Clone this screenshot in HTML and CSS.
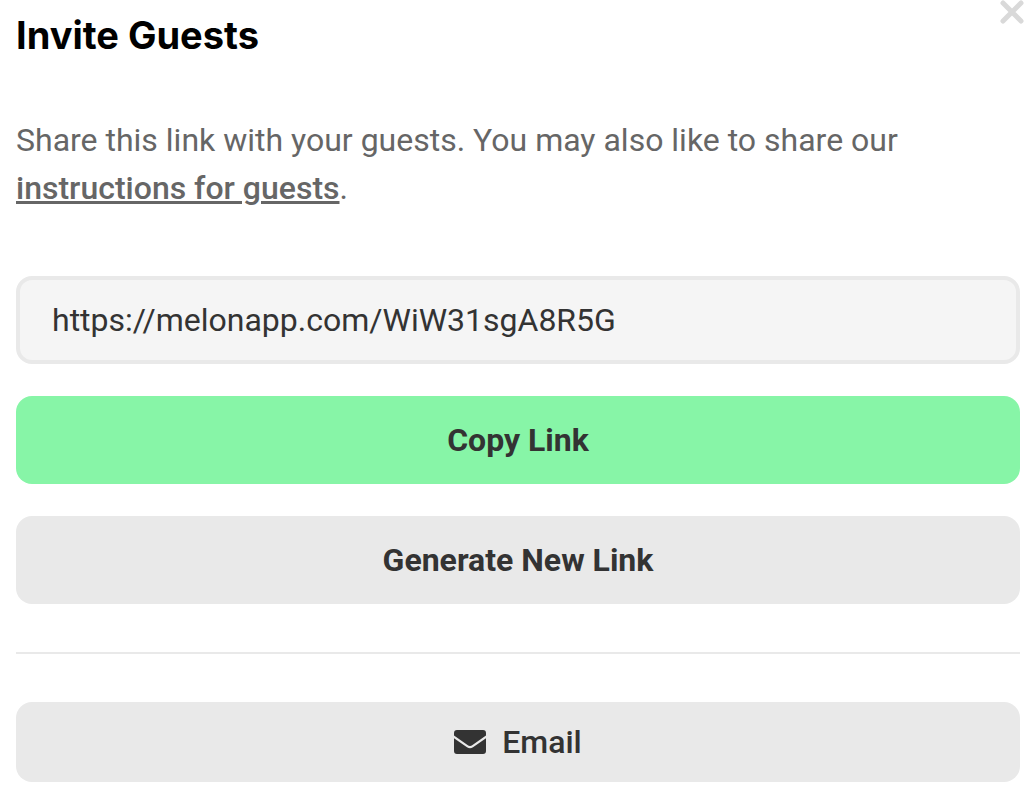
FILE: index.html
```html
<!DOCTYPE html>
<html lang="en">
<head>
<meta charset="utf-8">
<title>Invite Guests</title>
<link rel="stylesheet" href="styles.css">
</head>
<body>
<main class="dialog">
  <button class="close" type="button" aria-label="Close">
    <svg viewBox="0 0 24 24" width="24" height="24" aria-hidden="true"><path d="M3 3 21 21M21 3 3 21"/></svg>
  </button>
  <h1 class="title">Invite Guests</h1>
  <p class="intro">Share this link with your guests. You may also like to share our <a class="guide" href="#instructions">instructions for guests</a>.</p>
  <div class="actions">
    <input class="link-field" type="text" aria-label="Invite link" value="https://melonapp.com/WiW31sgA8R5G" readonly>
    <button class="button primary" type="button">Copy Link</button>
    <button class="button" type="button">Generate New Link</button>
  </div>
  <hr class="divider">
  <a class="button email" href="mailto:">
    <svg class="mail" viewBox="0 0 32 24" width="32" height="24" aria-hidden="true"><path d="M3 0H29Q32 0 32 3V5.500L18.500 15Q16 16.800 13.500 15L0 5.500V3Q0 0 3 0ZM0 8.200 13 17.200Q16 19.200 19 17.200L32 8.200V21Q32 24 29 24H3Q0 24 0 21Z"/></svg>
    <span>Email</span>
  </a>
</main>
</body>
</html>
```
FILE: styles.css
```css
* { box-sizing: border-box; }
body {
  margin: 0;
  background: #fff;
  color: #333;
  font-family: Roboto, "Liberation Sans", sans-serif;
  font-size: 32px;
  line-height: 48px;
}
.dialog {
  position: relative;
  padding: 12px 16px 10px;
}
.close {
  position: absolute;
  top: 0;
  right: 12px;
  display: block;
  padding: 0;
  border: 0;
  background: none;
  cursor: pointer;
}
.close svg {
  display: block;
  fill: none;
  stroke: #d9d9d9;
  stroke-width: 5;
  stroke-linecap: round;
}
.title {
  margin: 0;
  color: #000;
  font-family: Inter, "Liberation Sans", sans-serif;
  font-size: 38px;
  font-weight: 700;
  line-height: 46px;
}
.intro {
  margin: 58px 0 64px;
  color: #666;
}
.guide {
  color: inherit;
  font-weight: 500;
  text-decoration-thickness: 3px;
}
.actions {
  display: grid;
  gap: 32px;
}
.link-field,
.button {
  width: 100%;
  border-radius: 16px;
  color: #333;
  font: inherit;
}
.link-field {
  height: 88px;
  padding: 0 32px;
  border: 4px solid #e9e9e9;
  background: #f5f5f5;
}
.button {
  display: flex;
  align-items: center;
  justify-content: center;
  gap: 16px;
  padding: 20px 32px;
  border: 0;
  background: #e9e9e9;
  font-weight: 700;
  text-decoration: none;
  cursor: pointer;
}
.primary { background: #87f5a7; }
.divider {
  margin: 48px 0;
  border: 0;
  border-top: 2px solid #e9e9e9;
}
.email {
  padding: 16px 32px;
  font-weight: 500;
}
.mail { fill: #333; }
```
